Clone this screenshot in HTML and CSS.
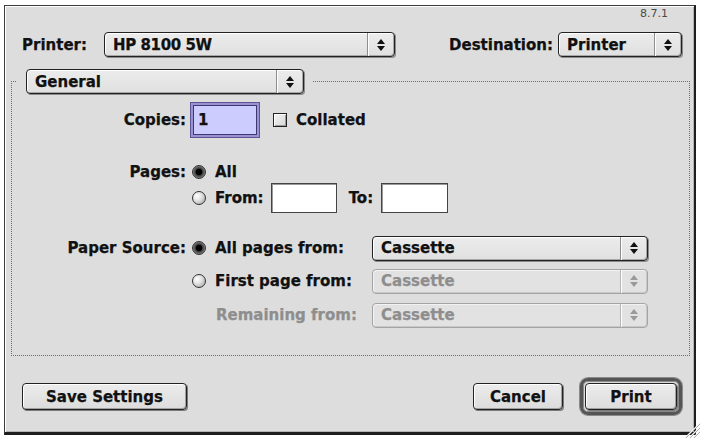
FILE: index.html
```html
<!DOCTYPE html>
<html>
<head>
<meta charset="utf-8">
<title>Print</title>
<link rel="stylesheet" href="styles.css">
</head>
<body>
<div class="window">
  <div class="version">8.7.1</div>
  <div class="top-row">
    <span class="lbl printer-lbl">Printer:</span>
    <div class="popup printer-pop">
      <span class="pop-text">HP 8100 5W</span>
      <span class="pop-arrows"><svg width="8" height="12" viewBox="0 0 8 12"><path d="M0 5 L4 0 L8 5 Z M0 7 L8 7 L4 12 Z" fill="#111"/></svg></span>
    </div>
    <div class="dest">
      <span class="lbl">Destination:</span>
      <div class="popup dest-pop">
        <span class="pop-text">Printer</span>
        <span class="pop-arrows"><svg width="8" height="12" viewBox="0 0 8 12"><path d="M0 5 L4 0 L8 5 Z M0 7 L8 7 L4 12 Z" fill="#111"/></svg></span>
      </div>
    </div>
  </div>

  <fieldset class="group">
    <legend class="group-legend">
      <div class="popup general-pop">
        <span class="pop-text">General</span>
        <span class="pop-arrows"><svg width="8" height="12" viewBox="0 0 8 12"><path d="M0 5 L4 0 L8 5 Z M0 7 L8 7 L4 12 Z" fill="#111"/></svg></span>
      </div>
    </legend>
    <div class="form">
      <div class="row copies-row">
        <span class="lbl col-label">Copies:</span>
        <div class="span-ctl">
          <div class="field focused">1</div>
          <span class="checkbox"></span>
          <span class="lbl collated">Collated</span>
        </div>
      </div>
      <div class="row pages-row">
        <span class="lbl col-label">Pages:</span>
        <div class="span-ctl">
          <span class="radio on"></span>
          <span class="lbl radio-lbl">All</span>
        </div>
      </div>
      <div class="row from-row">
        <span></span>
        <div class="span-ctl">
          <span class="radio"></span>
          <span class="lbl radio-lbl">From:</span>
          <div class="field from-field"></div>
          <span class="lbl to-lbl">To:</span>
          <div class="field to-field"></div>
        </div>
      </div>
      <div class="row paper-row">
        <span class="lbl col-label">Paper Source:</span>
        <div class="opt">
          <span class="radio on"></span>
          <span class="lbl radio-lbl">All pages from:</span>
        </div>
        <div class="popup src-pop">
          <span class="pop-text">Cassette</span>
          <span class="pop-arrows"><svg width="8" height="12" viewBox="0 0 8 12"><path d="M0 5 L4 0 L8 5 Z M0 7 L8 7 L4 12 Z" fill="#111"/></svg></span>
        </div>
      </div>
      <div class="row first-row">
        <span></span>
        <div class="opt">
          <span class="radio"></span>
          <span class="lbl radio-lbl">First page from:</span>
        </div>
        <div class="popup src-pop disabled">
          <span class="pop-text">Cassette</span>
          <span class="pop-arrows"><svg width="8" height="12" viewBox="0 0 8 12"><path d="M0 5 L4 0 L8 5 Z M0 7 L8 7 L4 12 Z" fill="#9a9a9a"/></svg></span>
        </div>
      </div>
      <div class="row remain-row">
        <span></span>
        <div class="opt">
          <span class="lbl remain-lbl">Remaining from:</span>
        </div>
        <div class="popup src-pop disabled">
          <span class="pop-text">Cassette</span>
          <span class="pop-arrows"><svg width="8" height="12" viewBox="0 0 8 12"><path d="M0 5 L4 0 L8 5 Z M0 7 L8 7 L4 12 Z" fill="#9a9a9a"/></svg></span>
        </div>
      </div>
    </div>
  </fieldset>

  <div class="button-row">
    <div class="btn save-btn">Save Settings</div>
    <div class="btn cancel-btn">Cancel</div>
    <div class="default-ring"><div class="btn print-btn">Print</div></div>
  </div>
</div>
<svg class="grip" width="22" height="22" viewBox="0 0 22 22">
  <path d="M6 21 L21 6 M10 21 L21 10 M14 21 L21 14 M18 21 L21 18" stroke="#f4f4f4" stroke-width="1.2"/>
  <path d="M7 21 L21 7 M11 21 L21 11 M15 21 L21 15" stroke="#9c9c9c" stroke-width="0.8"/>
</svg>
</body>
</html>
```
FILE: styles.css
```css
* { box-sizing: border-box; }

body {
  margin: 0;
  background: #ffffff;
  font-family: "DejaVu Sans", "Liberation Sans", sans-serif;
  font-weight: bold;
  font-size: 15px;
  color: #111;
  -webkit-text-stroke: 0.25px currentColor;
  position: relative;
  width: 701px;
  height: 439px;
  overflow: hidden;
}

.window {
  margin: 5px 0 0 4px;
  width: 692px;
  height: 430px;
  background: #dddddd;
  border: 1px solid #3c3c3c;
  border-right: 2px solid #1e1e1e;
  border-bottom: 3px solid #1e1e1e;
  box-shadow: inset 1px 1px 0 #ffffff, inset -1px -1px 0 #b4b4b4;
  display: flex;
  flex-direction: column;
}

.version {
  font-family: "DejaVu Sans", sans-serif;
  font-weight: normal;
  -webkit-text-stroke: 0;
  font-size: 11px;
  line-height: 12px;
  color: #4a4a4a;
  text-align: right;
  padding: 2px 26px 0 0;
}

.lbl { white-space: nowrap; }

.top-row {
  display: flex;
  align-items: center;
  margin-top: 12px;
  height: 25px;
  padding: 0 12px 0 17px;
}

.printer-lbl { width: 82px; flex: none; }

.dest {
  margin-left: auto;
  display: flex;
  align-items: center;
}
.dest .lbl { margin-right: 5px; }

/* Pop-up menus */
.popup {
  height: 25px;
  display: flex;
  align-items: stretch;
  border: 1px solid #222;
  border-radius: 4px;
  background: linear-gradient(#ececec, #e0e0e0);
  box-shadow: inset 1px 1px 0 #ffffff, inset -1px -1px 0 #a8a8a8, 1px 1px 0 #8a8a8a;
}
.pop-text {
  flex: 1;
  display: flex;
  align-items: center;
  padding-left: 8px;
  white-space: nowrap;
}
.pop-arrows {
  width: 27px;
  display: flex;
  align-items: center;
  justify-content: center;
  border-left: 1px solid #8e8e8e;
  box-shadow: inset 1px 0 0 #ffffff;
}
.printer-pop { width: 291px; }
.printer-pop .pop-text { letter-spacing: -0.4px; }
.dest-pop { width: 124px; }
.general-pop { width: 278px; }
.src-pop { width: 276px; }

.popup.disabled {
  border-color: #a4a4a4;
  color: #8e8e8e;
  box-shadow: inset 1px 1px 0 #f2f2f2, inset -1px -1px 0 #c8c8c8;
  background: #e2e2e2;
}
.popup.disabled .pop-arrows { border-left-color: #b4b4b4; }

/* Group box */
.group {
  margin: 12px 4px 0 6px;
  padding: 0;
  border: 1px dotted #6e6e6e;
  min-width: 0;
}
.group-legend {
  margin-left: 4px;
  padding: 0 9px 0 10px;
}

.form {
  display: flex;
  flex-direction: column;
  padding: 8px 0 27px;
}
.row {
  display: grid;
  grid-template-columns: 180px 180px 276px;
  align-items: center;
}
.col-label {
  text-align: right;
  padding-right: 6px;
}
.span-ctl {
  grid-column: 2 / 4;
  display: flex;
  align-items: center;
}
.opt {
  display: flex;
  align-items: center;
  height: 100%;
}

.copies-row { height: 36px; }
.pages-row { height: 22px; margin-top: 23px; }
.from-row { height: 30px; }
.paper-row { height: 26px; margin-top: 22px; }
.first-row { height: 26px; margin-top: 7px; }
.remain-row { height: 26px; margin-top: 8px; }

/* Text fields */
.field {
  height: 30px;
  background: #ffffff;
  border: 1px solid #444;
  box-shadow: inset 1px 1px 0 #9a9a9a;
  display: flex;
  align-items: center;
  padding-left: 4px;
}
.field.focused {
  width: 64px;
  margin-left: 1px;
  background: #ccccff;
  border-color: #3e3872;
  box-shadow: 0 0 0 2px #9a92d2, 0 0 0 3px #5c5494;
}
.from-field { width: 66px; margin-left: 7px; }
.to-field { width: 67px; margin-left: 8px; }
.to-lbl { margin-left: 12px; }

.checkbox {
  width: 14px;
  height: 14px;
  margin-left: 16px;
  border: 1px solid #222;
  background: linear-gradient(135deg, #f4f4f4, #d6d6d6);
  box-shadow: inset 1px 1px 0 #ffffff, inset -1px -1px 0 #9c9c9c;
}
.collated { margin-left: 9px; }

/* Radios */
.radio {
  width: 14px;
  height: 14px;
  border-radius: 50%;
  border: 1px solid #333;
  background: radial-gradient(circle at 35% 35%, #ffffff 0, #e2e2e2 40%, #9a9a9a 100%);
  flex: none;
}
.radio.on {
  background: radial-gradient(circle at 50% 50%, #000 0, #000 2.8px, #3a3a3a 3.6px, #5e5e5e 5px, #a0a0a0 7px);
}
.radio-lbl { margin-left: 9px; }
.remain-lbl { margin-left: 24px; color: #8e8e8e; }

/* Buttons */
.button-row {
  display: flex;
  align-items: center;
  margin-top: 22px;
  height: 37px;
  padding: 0 12px 0 17px;
}
.btn {
  height: 27px;
  border: 1px solid #222;
  border-radius: 4px;
  background: linear-gradient(#ececec, #dcdcdc);
  box-shadow: inset 1px 1px 0 #ffffff, inset -1px -1px 0 #a0a0a0, 1px 1px 0 #7a7a7a;
  display: flex;
  align-items: center;
  justify-content: center;
  white-space: nowrap;
}
.save-btn { width: 165px; }
.cancel-btn { width: 90px; margin-left: auto; }
.default-ring {
  margin-left: 17px;
  border: 3px solid #555;
  border-radius: 8px;
  padding: 2px;
  box-shadow: 0 0 0 1px #8a8a8a, inset 0 0 0 1px #8a8a8a;
}
.print-btn { width: 92px; }

.grip {
  position: absolute;
  left: 679px;
  top: 417px;
}
```
